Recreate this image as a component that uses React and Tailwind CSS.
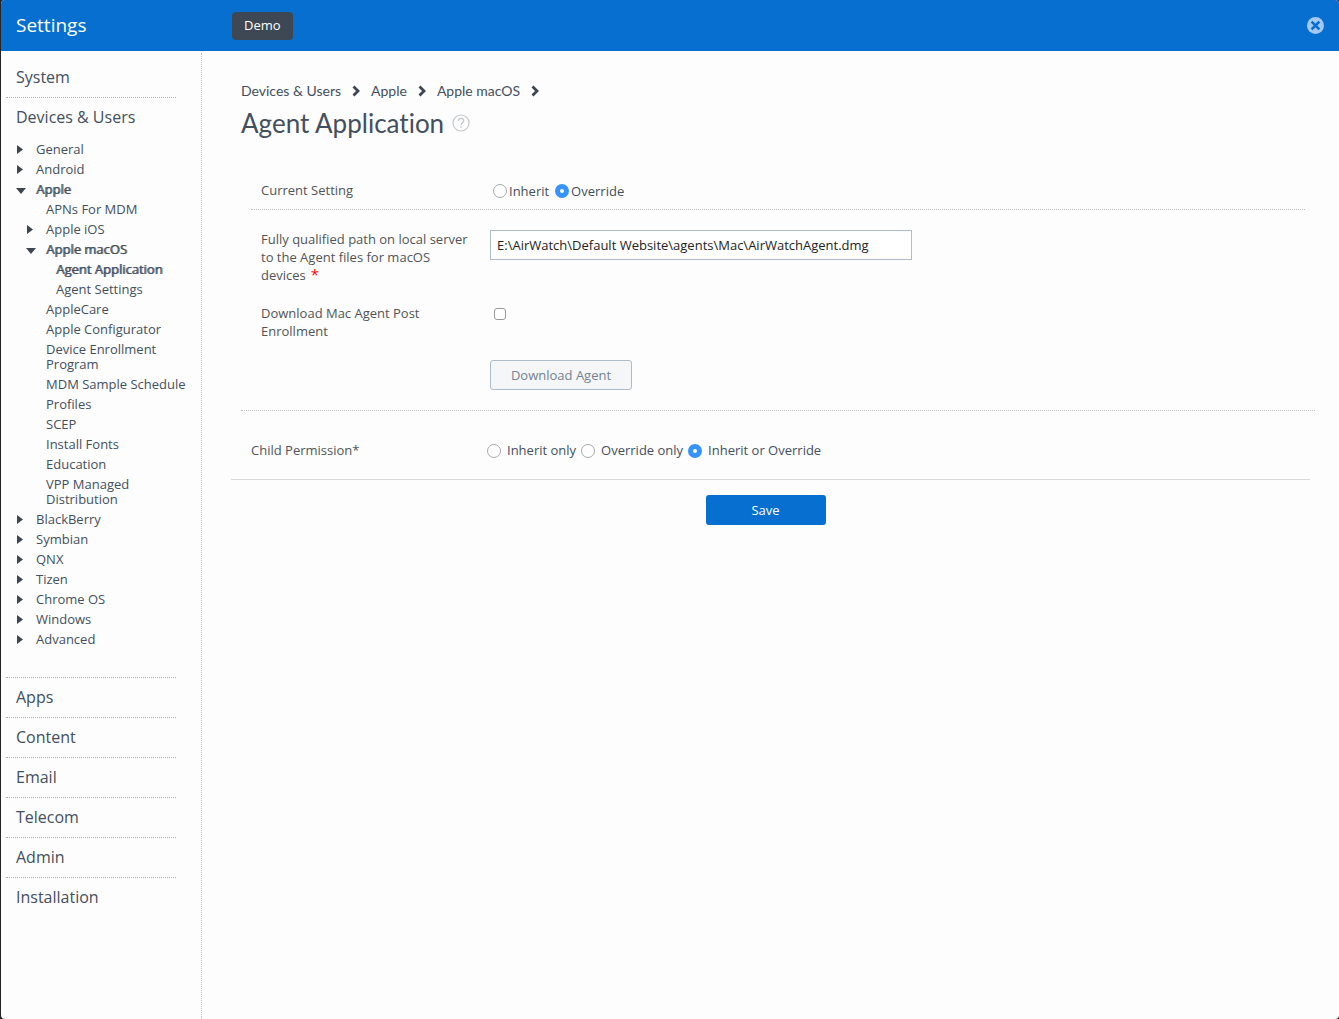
/**
 * App.jsx
 * Settings window: section menu on the left, agent application form on the right
 */

import { useState } from 'react'

// ─── Section tree for "Devices & Users" ────────────────────────────────────
// arrow: 'right' = collapsed, 'down' = expanded, none = leaf
const TREE = [
  { label: 'General', level: 0, arrow: 'right' },
  { label: 'Android', level: 0, arrow: 'right' },
  { label: 'Apple', level: 0, arrow: 'down', active: true },
  { label: 'APNs For MDM', level: 1 },
  { label: 'Apple iOS', level: 1, arrow: 'right' },
  { label: 'Apple macOS', level: 1, arrow: 'down', active: true },
  { label: 'Agent Application', level: 2, active: true },
  { label: 'Agent Settings', level: 2 },
  { label: 'AppleCare', level: 1 },
  { label: 'Apple Configurator', level: 1 },
  { label: 'Device Enrollment Program', level: 1 },
  { label: 'MDM Sample Schedule', level: 1 },
  { label: 'Profiles', level: 1 },
  { label: 'SCEP', level: 1 },
  { label: 'Install Fonts', level: 1 },
  { label: 'Education', level: 1 },
  { label: 'VPP Managed Distribution', level: 1 },
  { label: 'BlackBerry', level: 0, arrow: 'right' },
  { label: 'Symbian', level: 0, arrow: 'right' },
  { label: 'QNX', level: 0, arrow: 'right' },
  { label: 'Tizen', level: 0, arrow: 'right' },
  { label: 'Chrome OS', level: 0, arrow: 'right' },
  { label: 'Windows', level: 0, arrow: 'right' },
  { label: 'Advanced', level: 0, arrow: 'right' },
]

const SECTIONS = ['Apps', 'Content', 'Email', 'Telecom', 'Admin', 'Installation']

const CRUMBS = ['Devices & Users', 'Apple', 'Apple macOS']

const INDENT = ['pl-[15px]', 'pl-[25px]', 'pl-[35px]']

function Arrow({ dir }) {
  return (
    <svg width="10" height="10" viewBox="0 0 10 10" fill="#3c4653" aria-hidden="true">
      {dir === 'right' && <path d="M1 0 L7 4.5 L1 9 Z" />}
      {dir === 'down' && <path d="M0 3 H10 L5 9 Z" />}
    </svg>
  )
}

function SectionLink({ label, last }) {
  return (
    <a
      href="#"
      className={`ml-[5px] block h-10 w-[170px] pl-2.5 text-base leading-[39px] ${
        last ? '' : 'border-b border-dotted border-[#b0b0b0]'
      }`}
    >
      {label}
    </a>
  )
}

function TreeItem({ label, level, arrow, active }) {
  return (
    <li className={`flex pr-3 pt-[3px] pb-[2px] ${INDENT[level]}`}>
      <span className="flex h-[15px] w-5 shrink-0 items-center">
        <Arrow dir={arrow} />
      </span>
      <a
        href="#"
        className={`text-[13px] leading-[15px] ${active ? '[text-shadow:1px_0_0_#434f5dcc]' : ''}`}
      >
        {label}
      </a>
    </li>
  )
}

function Radio({ name, label, checked, onChange, gap }) {
  return (
    <label className={`flex items-center ${gap}`}>
      <input
        type="radio"
        name={name}
        checked={checked}
        onChange={onChange}
        className="size-3.5 appearance-none rounded-full border border-[#a9a9a9] bg-white checked:border-[5px] checked:border-[#3693fb]"
      />
      {label}
    </label>
  )
}

function App() {
  const [setting, setSetting] = useState('Override')
  const [permission, setPermission] = useState('Inherit or Override')
  const [path, setPath] = useState('E:\\AirWatch\\Default Website\\agents\\Mac\\AirWatchAgent.dmg')
  const [postEnroll, setPostEnroll] = useState(false)

  return (
    <div className="flex min-h-screen flex-col bg-[#25262a] pl-px font-['Open_Sans',sans-serif] text-[13px] text-[#434f5d]">
      <div className="flex flex-1 flex-col overflow-hidden rounded bg-[#fdfdfd]">

        {/* ── Top bar ───────────────────────────────────────────── */}
        <header className="flex h-[51px] items-center bg-[#066fcf] px-[15px] text-white">
          <h1 className="w-[216px] text-[19px]">Settings</h1>
          <button type="button" className="h-7 rounded bg-[#3e4855] px-3 text-[13px]">
            Demo
          </button>
          <button type="button" aria-label="Close" className="ml-auto">
            <svg width="17" height="17" viewBox="0 0 17 17" className="block">
              <circle cx="8.5" cy="8.5" r="8.5" fill="#a5c9ee" />
              <path d="M4.6 4.6 L12.4 12.4 M12.4 4.6 L4.6 12.4" stroke="#066fcf" strokeWidth="2.6" />
            </svg>
          </button>
        </header>

        <div className="flex flex-1">

          {/* ── Section menu ────────────────────────────────────── */}
          <nav className="mt-0.5 w-[201px] shrink-0 border-r border-dotted border-[#c0c0c0] pt-[5px]">
            <SectionLink label="System" />
            <SectionLink label="Devices & Users" last />
            <ul className="mt-px mb-7">
              {TREE.map((item) => (
                <TreeItem key={item.label} {...item} />
              ))}
            </ul>
            <div className="ml-[5px] w-[170px] border-t border-dotted border-[#b0b0b0]" />
            {SECTIONS.map((label, i) => (
              <SectionLink key={label} label={label} last={i === SECTIONS.length - 1} />
            ))}
          </nav>

          {/* ── Form ────────────────────────────────────────────── */}
          <main className="min-w-0 flex-1 px-[29px] pt-8">
            <div className="px-2.5 font-[Lato,sans-serif]">
              <div className="flex h-4 items-center text-sm">
                {CRUMBS.map((crumb) => (
                  <span key={crumb} className="flex items-center">
                    <a href="#">{crumb}</a>
                    <svg width="8" height="12" viewBox="0 0 8 12" className="mx-[11px]" aria-hidden="true">
                      <path d="M1.5 1.5 L6 6 L1.5 10.5" fill="none" stroke="#3c4653" strokeWidth="2.8" />
                    </svg>
                  </span>
                ))}
              </div>
              <div className="mt-2 flex h-8 items-center gap-2">
                <h2 className="text-[26px] leading-8 [font-variant-ligatures:none]">Agent Application</h2>
                <button type="button" aria-label="Help">
                  <svg width="18" height="18" viewBox="0 0 18 18" fill="none" stroke="#c3c7cb" className="block">
                    <circle cx="9" cy="9" r="8" strokeWidth="1.2" />
                    <path
                      d="M6.3 6.9 C6.3 5.2 7.5 4.4 9 4.4 C10.6 4.4 11.7 5.3 11.7 6.7 C11.7 8.6 9 8.8 9 11"
                      strokeWidth="1.2"
                    />
                    <circle cx="9" cy="13.1" r="0.8" fill="#c3c7cb" stroke="none" />
                  </svg>
                </button>
              </div>
            </div>

            <form onSubmit={(e) => e.preventDefault()}>
              <div className="-mr-[5px] ml-2.5 border-b border-dotted border-[#c0c0c0] pt-10 pb-5">

                {/* Current setting */}
                <div className="mx-2.5 flex h-[31px] border-b border-dotted border-[#c0c0c0] pl-2.5 leading-5 text-[#505458]">
                  <span className="w-[232px] shrink-0 pt-px">Current Setting</span>
                  <div className="flex h-[22px] items-center gap-1.5 pt-px text-[#434f5d]">
                    {['Inherit', 'Override'].map((name) => (
                      <Radio
                        key={name}
                        name="setting"
                        label={name}
                        gap="gap-0.5"
                        checked={setting === name}
                        onChange={() => setSetting(name)}
                      />
                    ))}
                  </div>
                </div>

                <div className="mt-5 flex pl-5 leading-[18px] text-[#505458]">
                  <label htmlFor="agent-path" className="w-[229px] shrink-0 pr-5">
                    Fully qualified path on local server to the Agent files for macOS devices
                    <span className="ml-[5px] text-[15px] leading-4 text-[#ff0000]">*</span>
                  </label>
                  <input
                    id="agent-path"
                    type="text"
                    value={path}
                    onChange={(e) => setPath(e.target.value)}
                    className="h-[30px] w-[422px] border border-[#adbccb] bg-white px-1.5 text-[13px] text-[#222]"
                  />
                </div>

                <div className="mt-5 flex pl-5 leading-[18px] text-[#505458]">
                  <label htmlFor="post-enroll" className="w-[233px] shrink-0 pr-12">
                    Download Mac Agent Post Enrollment
                  </label>
                  <input
                    id="post-enroll"
                    type="checkbox"
                    checked={postEnroll}
                    onChange={(e) => setPostEnroll(e.target.checked)}
                    className="mt-1 size-3 appearance-none rounded-[3px] border border-[#999] bg-white checked:bg-[#3693fb]"
                  />
                </div>

                <button
                  type="button"
                  className="mt-5 ml-[249px] block h-[30px] w-[142px] rounded-[3px] border border-[#adbccb] bg-[#f4f6f8] pt-0.5 text-[13px] text-[#76828f]"
                >
                  Download Agent
                </button>
              </div>

              {/* Child permission */}
              <div className="flex h-[69px] items-center border-b border-[#d9d9d9] pt-3 pl-5">
                <span className="w-[236px] shrink-0 text-[#505458]">Child Permission*</span>
                <div className="flex gap-[5px]">
                  {['Inherit only', 'Override only', 'Inherit or Override'].map((name) => (
                    <Radio
                      key={name}
                      name="permission"
                      label={name}
                      gap="gap-[6px]"
                      checked={permission === name}
                      onChange={() => setPermission(name)}
                    />
                  ))}
                </div>
              </div>

              <div className="flex justify-center pt-[15px] pr-2.5">
                <button
                  type="submit"
                  className="h-[30px] w-[120px] rounded-[3px] bg-[#066fcf] pt-0.5 text-[13px] text-white"
                >
                  Save
                </button>
              </div>
            </form>
          </main>
        </div>
      </div>
    </div>
  )
}

export default App
